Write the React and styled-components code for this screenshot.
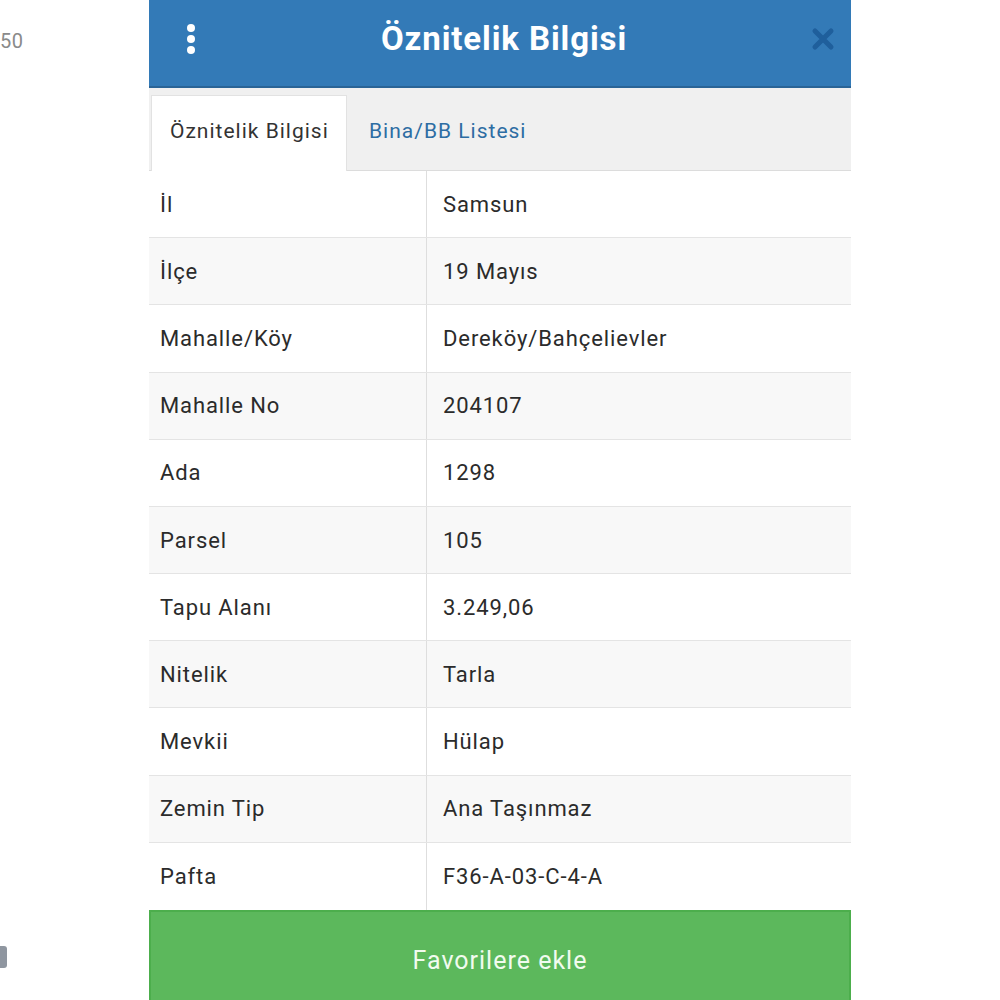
import React from 'react';
import styled, { createGlobalStyle } from 'styled-components';

const GlobalStyle = createGlobalStyle`
  html, body {
    margin: 0;
    padding: 0;
    background: #ffffff;
  }
  body {
    font-family: Roboto, "Noto Sans", "Liberation Sans", sans-serif;
  }
`;

const Page = styled.div`
  display: flex;
  width: 1000px;
  height: 1000px;
  overflow: hidden;
  background: #fff;
`;

const Gutter = styled.div`
  width: 149px;
  flex-shrink: 0;
  display: flex;
  flex-direction: column;
  justify-content: space-between;
  padding: 29px 0 32px;
  box-sizing: border-box;
`;

const GutterText = styled.div`
  font-size: 20px;
  color: #8a8a8a;
  letter-spacing: 0.5px;
`;

const GutterChip = styled.div`
  width: 7px;
  height: 22px;
  background: #8f96a0;
  border-radius: 0 3px 3px 0;
`;

const Modal = styled.div`
  width: 702px;
  display: flex;
  flex-direction: column;
  height: 1000px;
`;

const Header = styled.div`
  height: 88px;
  background: #337ab7;
  border-bottom: 2px solid #2a6496;
  box-sizing: border-box;
  display: flex;
  align-items: center;
  padding: 0 16px 8px 30px;
`;

const IconButton = styled.div`
  width: 24px;
  display: flex;
  justify-content: center;
  align-items: center;
`;

const Title = styled.h1`
  flex: 1;
  margin: 0;
  text-align: center;
  color: #fff;
  font-size: 33px;
  font-weight: 700;
  letter-spacing: 0.9px;
  padding-right: 6px;
`;

const TabBar = styled.div`
  height: 83px;
  background: #f0f0f0;
  border-bottom: 1px solid #dcdcdc;
  box-sizing: border-box;
  display: flex;
  align-items: flex-end;
  padding-left: 2px;
`;

const Tab = styled.div`
  height: 76px;
  display: flex;
  align-items: center;
  padding: 0 0 4px ${p => (p.$active ? '18px' : '22px')};
  box-sizing: border-box;
  white-space: nowrap;
  font-size: 21px;
  letter-spacing: 1px;
  color: ${p => (p.$active ? '#333' : '#2d6da3')};
  background: ${p => (p.$active ? '#fff' : 'transparent')};
  border: ${p => (p.$active ? '1px solid #e2e2e2' : 'none')};
  border-bottom: none;
  margin-bottom: -1px;
  width: ${p => (p.$active ? '196px' : 'auto')};
`;

const Table = styled.div`
  display: flex;
  flex-direction: column;
  flex: 1;
`;

const Row = styled.div`
  display: grid;
  grid-template-columns: 277px 1fr;
  height: 67.2px;
  background: ${p => (p.$striped ? '#f8f8f8' : '#fff')};
  border-bottom: 1px solid #e4e4e4;
  box-sizing: border-box;
  &:last-child {
    border-bottom: none;
  }
`;

const Cell = styled.div`
  display: flex;
  align-items: center;
  padding-left: ${p => (p.$value ? '16px' : '11px')};
  font-size: 22px;
  letter-spacing: 0.9px;
  color: #2b2b2b;
  border-left: ${p => (p.$value ? '1px solid #dedede' : 'none')};
`;

const FavButton = styled.div`
  height: 90px;
  background: #5cb85c;
  border: 2px solid #4cae4c;
  border-bottom: none;
  box-sizing: border-box;
  display: flex;
  align-items: center;
  justify-content: center;
  color: #f1fbef;
  font-size: 25px;
  letter-spacing: 1px;
  padding-top: 8px;
`;

const rows = [
  ['İl', 'Samsun'],
  ['İlçe', '19 Mayıs'],
  ['Mahalle/Köy', 'Dereköy/Bahçelievler'],
  ['Mahalle No', '204107'],
  ['Ada', '1298'],
  ['Parsel', '105'],
  ['Tapu Alanı', '3.249,06'],
  ['Nitelik', 'Tarla'],
  ['Mevkii', 'Hülap'],
  ['Zemin Tip', 'Ana Taşınmaz'],
  ['Pafta', 'F36-A-03-C-4-A'],
];

const Kebab = () => (
  <svg width="14" height="32" viewBox="0 0 14 32">
    <circle cx="7" cy="5" r="4" fill="#fff" />
    <circle cx="7" cy="16" r="4" fill="#fff" />
    <circle cx="7" cy="27" r="4" fill="#fff" />
  </svg>
);

const CloseIcon = () => (
  <svg width="24" height="24" viewBox="0 0 24 24">
    <path d="M4 4 L20 20 M20 4 L4 20" stroke="#1f5f9c" strokeWidth="5" strokeLinecap="round" />
  </svg>
);

export default function App() {
  return (
    <>
      <GlobalStyle />
      <Page>
        <Gutter>
          <GutterText>50</GutterText>
          <GutterChip />
        </Gutter>
        <Modal>
          <Header>
            <IconButton><Kebab /></IconButton>
            <Title>Öznitelik Bilgisi</Title>
            <IconButton><CloseIcon /></IconButton>
          </Header>
          <TabBar>
            <Tab $active>Öznitelik Bilgisi</Tab>
            <Tab>Bina/BB Listesi</Tab>
          </TabBar>
          <Table>
            {rows.map(([label, value], i) => (
              <Row key={label} $striped={i % 2 === 1}>
                <Cell>{label}</Cell>
                <Cell $value>{value}</Cell>
              </Row>
            ))}
          </Table>
          <FavButton>Favorilere ekle</FavButton>
        </Modal>
      </Page>
    </>
  );
}
